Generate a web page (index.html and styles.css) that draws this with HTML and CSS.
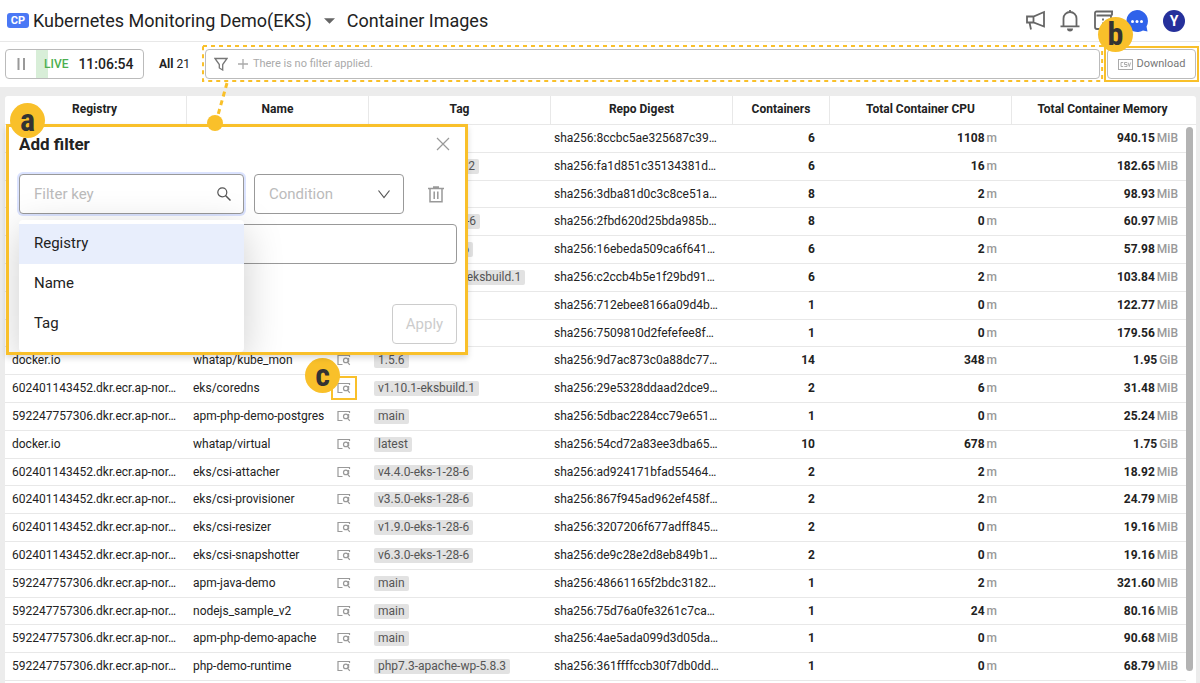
FILE: index.html
```html
<!DOCTYPE html>
<html lang="en">
<head>
<meta charset="utf-8">
<title>Container Images</title>
<link rel="stylesheet" href="styles.css">
</head>
<body>
<svg class="sprite" aria-hidden="true">
  <symbol id="detail" viewBox="0 0 14 12">
    <path d="M5.500 10.500H1V1.500h11.500v1.500" fill="none" stroke="currentColor" stroke-width="1.200"/>
    <circle cx="8.800" cy="6.400" r="2.300" fill="none" stroke="currentColor" stroke-width="1.200"/>
    <path d="M11.600 4v4M10.400 8l2.400 2.800" fill="none" stroke="currentColor" stroke-width="1.200"/>
  </symbol>
</svg>

<header class="topbar">
  <span class="cp">CP</span>
  <button class="project" type="button">Kubernetes Monitoring Demo(EKS)
    <svg class="caret" viewBox="0 0 12 6"><path d="M0 0h12L6 6z" fill="#666"/></svg>
  </button>
  <h1 class="page-title">Container Images</h1>
  <nav class="actions">
    <button type="button" aria-label="Announcements"><svg viewBox="0 0 22 22" width="22" height="22"><path d="M3 6.500h6.500L20 2v14.500L9.500 12.500H3zM9.500 6.500v6M5.500 12.500l1.500 7" fill="none" stroke="#666" stroke-width="1.800"/></svg></button>
    <button type="button" aria-label="Notifications"><svg viewBox="0 0 22 22" width="22" height="22"><path d="M5.500 16V8.500a6.500 6.500 0 0 1 13 0V16M2.500 16.300h19M12 0v2" fill="none" stroke="#666" stroke-width="1.800"/><path d="M9 18.500h6a3 3 0 0 1-6 0z" fill="#666"/></svg></button>
    <button type="button" aria-label="Notes"><svg viewBox="0 0 22 22" width="22" height="22"><path d="M21 1.500H4.500a1.500 1.500 0 0 0-1.500 1.500V17a2 2 0 0 0 2 2h12a2 2 0 0 0 2-2V5.500H4.500M20 1.500v4" fill="none" stroke="#666" stroke-width="1.800"/><path d="M11 8.500v2M11 12.500v2" stroke="#666" stroke-width="1.800"/></svg></button>
    <button type="button" aria-label="Chat"><svg viewBox="0 0 22 22" width="22" height="22"><path d="M11 0a11 11 0 0 1 9.500 16.500l1 5-4.500-1A11 11 0 1 1 11 0z" fill="#2f62ea"/><circle cx="6.500" cy="11.500" r="1.500" fill="#fff"/><circle cx="11" cy="11.500" r="1.500" fill="#fff"/><circle cx="15.500" cy="11.500" r="1.500" fill="#fff"/></svg></button>
    <button class="avatar" type="button" aria-label="Account">Y</button>
  </nav>
  <span class="mark mark-b">b</span>
</header>

<section class="toolbar">
  <div class="live">
    <button class="pause" type="button" aria-label="Pause"><svg viewBox="0 0 9 12" width="9" height="12"><path d="M1.500 0v12M7 0v12" stroke="#999" stroke-width="2"/></svg></button>
    <span class="live-bar"></span>
    <span class="live-label">LIVE</span>
    <time class="clock">11:06:54</time>
  </div>
  <div class="count"><b>All</b> 21</div>
  <div class="filter-wrap">
    <button class="filter" type="button">
      <svg viewBox="0 0 14 14" width="14" height="14"><path d="M1 1.500h12L8.700 7.500V13L5.300 11V7.500z" fill="none" stroke="#777" stroke-width="1.300"/></svg>
      <svg viewBox="0 0 10 10" width="10" height="10"><path d="M5 0v10M0 5h10" stroke="#aaa" stroke-width="1.300"/></svg>
      <span>There is no filter applied.</span>
    </button>
    <svg class="dash-frame"><rect x="0" y="1" width="100%" height="35"/></svg>
  </div>
  <div class="download-wrap">
    <button class="download" type="button">
      <svg viewBox="0 0 15 11" width="15" height="11"><rect x=".5" y=".5" width="14" height="10" fill="none" stroke="#aaa"/><path d="M5.200 3.500H3v4h2.200M9 3.500H6.500v2H9v2H6.300M10 3.500l1.300 4 1.300-4" fill="none" stroke="#999" stroke-width=".8"/></svg>
      Download
    </button>
  </div>
</section>

<main class="stage">
  <div class="panel">
    <table class="images">
      <colgroup><col class="w-std"><col class="w-std"><col class="w-std"><col class="w-std"><col class="w-count"><col class="w-std"><col class="w-last"></colgroup>
      <thead><tr><th>Registry</th><th>Name</th><th>Tag</th><th>Repo Digest</th><th>Containers</th><th>Total Container CPU</th><th>Total Container Memory</th></tr></thead>
      <tbody>
        <tr><td></td><td></td><td></td><td>sha256:8ccbc5ae325687c39…</td><td>6</td><td>1108<i>m</i></td><td>940.15<i>MiB</i></td></tr>
        <tr><td></td><td></td><td><span class="tag">v1.10.1-eksbuild.2</span></td><td>sha256:fa1d851c35134381d…</td><td>6</td><td>16<i>m</i></td><td>182.65<i>MiB</i></td></tr>
        <tr><td></td><td></td><td></td><td>sha256:3dba81d0c3c8ce51a…</td><td>8</td><td>2<i>m</i></td><td>98.93<i>MiB</i></td></tr>
        <tr><td></td><td></td><td><span class="tag">v2.10.0-eks-1-28-6</span></td><td>sha256:2fbd620d25bda985b…</td><td>8</td><td>0<i>m</i></td><td>60.97<i>MiB</i></td></tr>
        <tr><td></td><td></td><td><span class="tag">v2.9.0-eks-1-28-6</span></td><td>sha256:16ebeda509ca6f641…</td><td>6</td><td>2<i>m</i></td><td>57.98<i>MiB</i></td></tr>
        <tr><td></td><td></td><td><span class="tag">v1.28.2-minimal-eksbuild.1</span></td><td>sha256:c2ccb4b5e1f29bd91…</td><td>6</td><td>2<i>m</i></td><td>103.84<i>MiB</i></td></tr>
        <tr><td></td><td></td><td></td><td>sha256:712ebee8166a09d4b…</td><td>1</td><td>0<i>m</i></td><td>122.77<i>MiB</i></td></tr>
        <tr><td></td><td></td><td></td><td>sha256:7509810d2fefefee8f…</td><td>1</td><td>0<i>m</i></td><td>179.56<i>MiB</i></td></tr>
        <tr><td>docker.io</td><td><div class="name">whatap/kube_mon<button type="button" aria-label="Details"><svg><use href="#detail"/></svg></button></div></td><td><span class="tag">1.5.6</span></td><td>sha256:9d7ac873c0a88dc77…</td><td>14</td><td>348<i>m</i></td><td>1.95<i>GiB</i></td></tr>
        <tr><td>602401143452.dkr.ecr.ap-nor…</td><td><div class="name">eks/coredns<button class="marked" type="button" aria-label="Details"><svg><use href="#detail"/></svg><span class="mark mark-c">c</span></button></div></td><td><span class="tag">v1.10.1-eksbuild.1</span></td><td>sha256:29e5328ddaad2dce9…</td><td>2</td><td>6<i>m</i></td><td>31.48<i>MiB</i></td></tr>
        <tr><td>592247757306.dkr.ecr.ap-nor…</td><td><div class="name">apm-php-demo-postgres<button type="button" aria-label="Details"><svg><use href="#detail"/></svg></button></div></td><td><span class="tag">main</span></td><td>sha256:5dbac2284cc79e651…</td><td>1</td><td>0<i>m</i></td><td>25.24<i>MiB</i></td></tr>
        <tr><td>docker.io</td><td><div class="name">whatap/virtual<button type="button" aria-label="Details"><svg><use href="#detail"/></svg></button></div></td><td><span class="tag">latest</span></td><td>sha256:54cd72a83ee3dba65…</td><td>10</td><td>678<i>m</i></td><td>1.75<i>GiB</i></td></tr>
        <tr><td>602401143452.dkr.ecr.ap-nor…</td><td><div class="name">eks/csi-attacher<button type="button" aria-label="Details"><svg><use href="#detail"/></svg></button></div></td><td><span class="tag">v4.4.0-eks-1-28-6</span></td><td>sha256:ad924171bfad55464…</td><td>2</td><td>2<i>m</i></td><td>18.92<i>MiB</i></td></tr>
        <tr><td>602401143452.dkr.ecr.ap-nor…</td><td><div class="name">eks/csi-provisioner<button type="button" aria-label="Details"><svg><use href="#detail"/></svg></button></div></td><td><span class="tag">v3.5.0-eks-1-28-6</span></td><td>sha256:867f945ad962ef458f…</td><td>2</td><td>2<i>m</i></td><td>24.79<i>MiB</i></td></tr>
        <tr><td>602401143452.dkr.ecr.ap-nor…</td><td><div class="name">eks/csi-resizer<button type="button" aria-label="Details"><svg><use href="#detail"/></svg></button></div></td><td><span class="tag">v1.9.0-eks-1-28-6</span></td><td>sha256:3207206f677adff845…</td><td>2</td><td>0<i>m</i></td><td>19.16<i>MiB</i></td></tr>
        <tr><td>602401143452.dkr.ecr.ap-nor…</td><td><div class="name">eks/csi-snapshotter<button type="button" aria-label="Details"><svg><use href="#detail"/></svg></button></div></td><td><span class="tag">v6.3.0-eks-1-28-6</span></td><td>sha256:de9c28e2d8eb849b1…</td><td>2</td><td>0<i>m</i></td><td>19.16<i>MiB</i></td></tr>
        <tr><td>592247757306.dkr.ecr.ap-nor…</td><td><div class="name">apm-java-demo<button type="button" aria-label="Details"><svg><use href="#detail"/></svg></button></div></td><td><span class="tag">main</span></td><td>sha256:48661165f2bdc3182…</td><td>1</td><td>2<i>m</i></td><td>321.60<i>MiB</i></td></tr>
        <tr><td>592247757306.dkr.ecr.ap-nor…</td><td><div class="name">nodejs_sample_v2<button type="button" aria-label="Details"><svg><use href="#detail"/></svg></button></div></td><td><span class="tag">main</span></td><td>sha256:75d76a0fe3261c7ca…</td><td>1</td><td>24<i>m</i></td><td>80.16<i>MiB</i></td></tr>
        <tr><td>592247757306.dkr.ecr.ap-nor…</td><td><div class="name">apm-php-demo-apache<button type="button" aria-label="Details"><svg><use href="#detail"/></svg></button></div></td><td><span class="tag">main</span></td><td>sha256:4ae5ada099d3d05da…</td><td>1</td><td>0<i>m</i></td><td>90.68<i>MiB</i></td></tr>
        <tr><td>592247757306.dkr.ecr.ap-nor…</td><td><div class="name">php-demo-runtime<button type="button" aria-label="Details"><svg><use href="#detail"/></svg></button></div></td><td><span class="tag">php7.3-apache-wp-5.8.3</span></td><td>sha256:361ffffccb30f7db0dd…</td><td>1</td><td>0<i>m</i></td><td>68.79<i>MiB</i></td></tr>
      </tbody>
    </table>
    <div class="scroll"><div class="thumb"></div></div>
  </div>

  <form class="dialog">
    <div class="dialog-body">
      <div class="dialog-head">
        <h2>Add filter</h2>
        <button type="button" aria-label="Close"><svg viewBox="0 0 14 14" width="14" height="14"><path d="M1 1l12 12M13 1L1 13" stroke="#999" stroke-width="1.200"/></svg></button>
      </div>
      <div class="dialog-row">
        <div class="field key">
          <input type="text" placeholder="Filter key" aria-label="Filter key">
          <svg viewBox="0 0 14 14" width="14" height="14"><circle cx="5.300" cy="5.300" r="4.500" fill="none" stroke="#555" stroke-width="1.200"/><path d="M8.500 8.500l5 5" stroke="#555" stroke-width="1.500"/></svg>
          <ul class="menu">
            <li class="active">Registry</li>
            <li>Name</li>
            <li>Tag</li>
          </ul>
        </div>
        <div class="field condition">
          <select aria-label="Condition"><option>Condition</option></select>
          <svg viewBox="0 0 14 14" width="14" height="14"><path d="M1.500 3.500L7 10.500 12.500 3.500" fill="none" stroke="#555" stroke-width="1.200"/></svg>
        </div>
        <button class="trash" type="button" aria-label="Delete"><svg viewBox="0 0 16 17" width="16" height="17"><path d="M0 2.500h16M5 1h6M2 2.500v13.300h12V2.500M6.200 5.500v7.500M9.800 5.500v7.500" fill="none" stroke="#999" stroke-width="1.500"/></svg></button>
      </div>
      <input class="value" type="text" aria-label="Filter value">
      <button class="apply" type="button">Apply</button>
    </div>
  </form>
  <svg class="connector" viewBox="0 0 40 60" width="40" height="60"><path d="M27 1L16 40" stroke="#f9c02a" stroke-width="3" stroke-dasharray="5 4"/><circle cx="15" cy="41" r="8" fill="#f9c02a"/></svg>
  <span class="mark mark-a">a</span>
</main>
</body>
</html>
```

FILE: styles.css
```css
* { box-sizing: border-box; }
html, body { height: 100%; }
body {
  margin: 0;
  display: flex;
  flex-direction: column;
  overflow: hidden;
  font: 12px/16px Roboto, sans-serif;
  color: #222;
  background: #fff;
}
button {
  font: inherit;
  color: inherit;
  background: none;
  border: 0;
  padding: 0;
  display: flex;
  align-items: center;
}
svg { display: block; flex: none; }
.sprite { display: none; }

.topbar {
  position: relative;
  display: flex;
  align-items: center;
  height: 42px;
  padding: 0 15px 0 7px;
  border-bottom: 1px solid #e8e8e8;
}
.cp {
  width: 22px;
  margin-right: 4px;
  border-radius: 3px;
  background: #4a78f5;
  color: #fff;
  font-size: 11px;
  font-weight: 700;
  line-height: 15px;
  text-align: center;
}
.project { font-size: 18px; line-height: 24px; gap: 12px; margin-right: 12px; }
.caret { width: 11px; height: 6px; }
.page-title { margin: 0; font-size: 18px; line-height: 24px; font-weight: 400; }
.actions { display: flex; align-items: center; gap: 12px; margin-left: auto; }
.avatar {
  width: 22px;
  height: 22px;
  margin-left: 3px;
  justify-content: center;
  border-radius: 50%;
  background: #25309b;
  color: #fff;
  font-size: 14px;
  font-weight: 700;
}

.toolbar {
  display: flex;
  align-items: center;
  height: 45px;
  padding: 0 4px 1px 5px;
}
.live {
  display: flex;
  align-items: center;
  width: 139px;
  height: 30px;
  padding-left: 11px;
  border: 1px solid #bbb;
  border-radius: 4px;
}
.live-bar { width: 12px; height: 28px; margin-left: 10px; background: #d8eed8; }
.live-label { margin-left: -4px; color: #4caf50; font-weight: 500; }
.clock { margin-left: 10px; font-size: 14px; font-weight: 500; }
.count { margin: 0 15px 0 15px; }
.count b { font-weight: 700; }
.filter-wrap { position: relative; flex: 1; }
.filter {
  width: 100%;
  height: 30px;
  padding: 0 8px;
  gap: 10px;
  border: 1px solid #bbb;
  border-radius: 4px;
  font-size: 11px;
  color: #aaa;
}
.filter span { margin-left: -5px; }
.dash-frame {
  position: absolute;
  top: -4px;
  left: -2px;
  width: calc(100% + 4px);
  height: 37px;
  overflow: visible;
  pointer-events: none;
}
.dash-frame rect { fill: none; stroke: #f9c02a; stroke-width: 2; stroke-dasharray: 4 4; }
.download-wrap { margin-left: 7px; outline: 2px solid #f9c02a; outline-offset: 1px; }
.download {
  height: 30px;
  width: 89px;
  gap: 4px;
  justify-content: center;
  border: 1px solid #bbb;
  border-radius: 4px;
  font-size: 11px;
  color: #777;
}

.stage {
  position: relative;
  flex: 1;
  min-height: 0;
  display: flex;
  padding: 9px 4px 0 5px;
  background: #ececec;
}
.panel { position: relative; flex: 1; background: #fff; border-radius: 3px 3px 0 0; }
.images { width: 100%; table-layout: fixed; border-collapse: separate; border-spacing: 0; }
.w-std { width: 182px; }
.w-count { width: 97px; }
.w-last { width: 184px; }
.images th {
  height: 29px;
  padding: 0 0 2px;
  font-weight: 700;
  border-bottom: 1px solid #e8e8e8;
  border-right: 1px solid #e8e8e8;
}
.images th:first-child { padding-right: 2px; }
.images th:last-child { border-right: 0; padding-right: 3px; }
.images td {
  height: 28px;
  padding: 0 7px 1px;
  border-bottom: 1px solid #e8e8e8;
  white-space: nowrap;
}
.images tr:nth-child(5n+3) td { height: 27px; }
.images td:nth-child(2) { padding-left: 6px; }
.images td:nth-child(3) { padding-left: 5px; }
.images td:nth-child(4) { padding-left: 3px; }
.images td:nth-child(n+5) { text-align: right; font-weight: 700; padding-right: 15px; }
.images td:last-child { padding-right: 18px; }
.images i { margin-left: 2px; font-style: normal; font-weight: 500; color: #999; }
.name { display: flex; align-items: center; justify-content: space-between; }
.name button { position: relative; margin-right: 11px; color: #999; }
.name svg { width: 14px; height: 12px; }
.name .marked { outline: 2px solid #f9c02a; outline-offset: 4px; }
.tag {
  display: inline-block;
  padding: 0 4px;
  border-radius: 2px;
  background: #e2e2e2;
  color: #555;
  line-height: 15px;
}
.scroll {
  position: absolute;
  top: 29px;
  right: 0;
  bottom: 0;
  width: 10px;
  padding: 2px 3px 12px 0;
  background: #fff;
}
.thumb { height: 100%; border-radius: 4px; background: #b3b3b3; }

.dialog {
  position: absolute;
  top: 37px;
  left: 6px;
  width: 462px;
  border: 3px solid #f9c02a;
  background: #fff;
  box-shadow: 0 3px 6px rgba(0, 0, 0, .15);
  font-size: 15px;
}
.dialog-body { display: flex; flex-direction: column; padding: 7px 8px 8px 10px; overflow: hidden; }
.dialog-head { display: flex; justify-content: space-between; padding-right: 7px; margin-bottom: 20px; }
.dialog h2 { margin: 0; font-size: 17px; line-height: 20px; font-weight: 700; }
.dialog-row { display: flex; align-items: center; gap: 10px; margin-bottom: 10px; }
.field { position: relative; }
.key { width: 225px; }
.condition { width: 150px; }
.field > svg { position: absolute; top: 13px; right: 13px; }
.field input, .field select, .value {
  width: 100%;
  height: 40px;
  padding: 0 14px;
  border: 1px solid #999;
  border-radius: 4px;
  background: #fff;
  font: inherit;
  color: #bbb;
  appearance: none;
  outline: 0;
}
.field input { box-shadow: 0 0 0 2px #dbe3ff; }
.field input::placeholder { color: #bbb; }
.trash { margin-left: 14px; }
.menu {
  position: absolute;
  z-index: 1;
  top: 46px;
  left: 0;
  width: 100%;
  margin: 0;
  padding: 4px 0 8px;
  list-style: none;
  background: #fff;
  border-radius: 4px;
  box-shadow: 0 10px 40px rgba(0, 0, 0, .2);
}
.menu li { padding: 0 15px 2px; line-height: 38px; }
.menu .active { background: #e8eefc; }
.apply {
  align-self: flex-end;
  width: 65px;
  height: 40px;
  margin-top: 40px;
  justify-content: center;
  border: 1px solid #ccc;
  border-radius: 4px;
  color: #ccc;
}

.connector { position: absolute; top: -5px; left: 200px; }
.mark {
  position: absolute;
  width: 35px;
  height: 35px;
  border-radius: 50%;
  background: #f9c02a;
  color: #333;
  font: 700 32px/34px "Roboto Condensed", "Liberation Sans Narrow", Roboto, sans-serif;
  text-align: center;
}
.mark-a { top: 16px; left: 10px; }
.mark-b { top: 17px; right: 67px; z-index: 2; }
.mark-c { top: -24px; left: -32px; }
```
